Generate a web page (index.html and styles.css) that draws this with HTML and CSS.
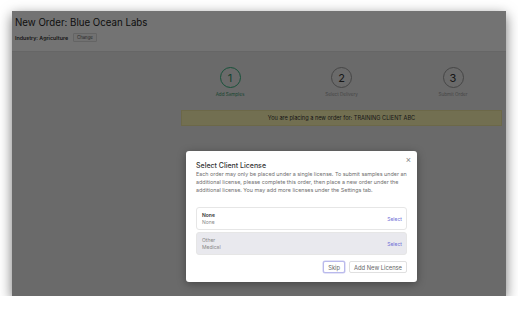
FILE: index.html
```html
<!DOCTYPE html>
<html>
<head>
  <meta charset="UTF-8">
  <title>New Order</title>
  <link rel="stylesheet" href="styles.css">
</head>
<body>
  <div class="window">
    <header class="page-header">
      <h1>New Order: Blue Ocean Labs</h1>
      <div class="industry">
        <span>Industry: Agriculture</span>
        <button class="change-button">Change</button>
      </div>
    </header>
    <div class="page-body">
      <div class="sidebar"></div>
      <div class="main">
        <div class="steps">
          <div class="step active">
            <div class="circle">1</div>
            <p>Add Samples</p>
          </div>
          <div class="step">
            <div class="circle">2</div>
            <p>Select Delivery</p>
          </div>
          <div class="step">
            <div class="circle">3</div>
            <p>Submit Order</p>
          </div>
        </div>
        <div class="banner">You are placing a new order for: TRAINING CLIENT ABC</div>
      </div>
    </div>

    <div class="overlay">
      <div class="modal">
        <button class="close-button">&times;</button>
        <h2>Select Client License</h2>
        <p class="modal-text">Each order may only be placed under a single license. To submit samples under an additional license, please complete this order, then place a new order under the additional license. You may add more licenses under the Settings tab.</p>
        <div class="license">
          <div>
            <p class="license-name">None</p>
            <p class="license-type">None</p>
          </div>
          <a href="#" class="select-link">Select</a>
        </div>
        <div class="license selected">
          <div>
            <p class="license-type">Other</p>
            <p class="license-type">Medical</p>
          </div>
          <a href="#" class="select-link">Select</a>
        </div>
        <div class="modal-actions">
          <button class="btn skip">Skip</button>
          <button class="btn">Add New License</button>
        </div>
      </div>
    </div>
  </div>
</body>
</html>
```

FILE: styles.css
```css
body {
  margin: 0;
  padding: 0;
  background-color: #fff;
  font-family: Inter, "Noto Sans", sans-serif;
  overflow: hidden;
}

.window {
  position: relative;
  margin: 11px 0 0 12px;
  width: 494px;
  height: 285px;
  background-color: #ebebeb;
  box-shadow: 0 4px 12px rgba(0, 0, 0, 0.55);
  overflow: hidden;
}

.page-header {
  background-color: #fff;
  height: 41px;
  padding: 6px 3px 0 3px;
  box-sizing: border-box;
  border-bottom: 1px solid #e2e2e2;
}

.page-header h1 {
  margin: 0;
  font-size: 9.7px;
  line-height: 12px;
  font-weight: 400;
  color: #1e1e1e;
}

.industry {
  display: flex;
  align-items: center;
  margin-top: 4px;
  font-size: 5.3px;
  font-weight: 600;
  color: #333;
}

.change-button {
  margin-left: 5px;
  padding: 0 3px;
  height: 9px;
  font-family: inherit;
  font-size: 4.3px;
  color: #555;
  background-color: #fafafa;
  border: 1px solid #ddd;
  border-radius: 1px;
}

.page-body {
  display: flex;
}

.sidebar {
  width: 169px;
}

.main {
  flex: 1;
  padding: 15px 4px 0 0;
}

.steps {
  display: flex;
  justify-content: space-between;
  padding: 0 25px 0 25px;
}

.step {
  display: flex;
  flex-direction: column;
  align-items: center;
  width: 48px;
}

.circle {
  width: 19px;
  height: 19px;
  border: 1.5px solid #9a9a9a;
  border-radius: 50%;
  display: flex;
  align-items: center;
  justify-content: center;
  font-size: 11px;
  color: #333;
}

.step p {
  margin: 4px 0 0 0;
  font-size: 4.6px;
  color: #a0a0a0;
  white-space: nowrap;
}

.step.active .circle {
  border-color: #34b27e;
  color: #2f8f66;
}

.step.active p {
  color: #3a9a70;
}

.banner {
  margin-top: 13px;
  height: 16px;
  background-color: #fdf6b4;
  border: 1px solid #efe6a0;
  box-sizing: border-box;
  display: flex;
  align-items: center;
  justify-content: center;
  font-size: 5.6px;
  color: #333;
}

.overlay {
  position: absolute;
  top: 0;
  left: 0;
  right: 0;
  bottom: 0;
  background-color: rgba(0, 0, 0, 0.55);
  padding: 140px 0 0 174px;
}

.modal {
  position: relative;
  width: 231px;
  height: 131px;
  box-sizing: border-box;
  padding: 10px 10px 0 10px;
  background-color: #fff;
  border-radius: 3px;
  box-shadow: 0 2px 8px rgba(0, 0, 0, 0.35);
}

.close-button {
  position: absolute;
  top: 5px;
  right: 6px;
  padding: 0;
  border: none;
  background: none;
  font-size: 9px;
  color: #888;
  line-height: 1;
}

.modal h2 {
  margin: 0;
  font-size: 7px;
  line-height: 9px;
  font-weight: 500;
  color: #333;
}

.modal-text {
  margin: 0;
  font-size: 5.4px;
  line-height: 8px;
  color: #6f6f6f;
}

.license {
  display: flex;
  justify-content: space-between;
  align-items: center;
  height: 23px;
  margin-top: 2px;
  padding: 0 4px 0 5px;
  border: 1px solid #e6e6e6;
  border-radius: 3px;
  box-sizing: border-box;
}

.modal-text + .license {
  margin-top: 13px;
}

.license p {
  margin: 0;
  font-size: 5px;
  line-height: 7px;
}

.license-name {
  font-weight: 600;
  color: #333;
}

.license-type {
  color: #888;
}

.license.selected {
  background-color: #e9e9ee;
}

.select-link {
  font-size: 5px;
  color: #6f6fd6;
  text-decoration: none;
}

.modal-actions {
  display: flex;
  justify-content: flex-end;
  gap: 4px;
  margin-top: 6px;
}

.btn {
  height: 12px;
  padding: 0 4px;
  font-family: inherit;
  font-size: 5.8px;
  color: #666;
  background-color: #fff;
  border: 1px solid #e0e0e0;
  border-radius: 2px;
}

.btn.skip {
  border-color: #b9b9ec;
  box-shadow: 0 0 0 0.5px #c9c9f0;
}
```
